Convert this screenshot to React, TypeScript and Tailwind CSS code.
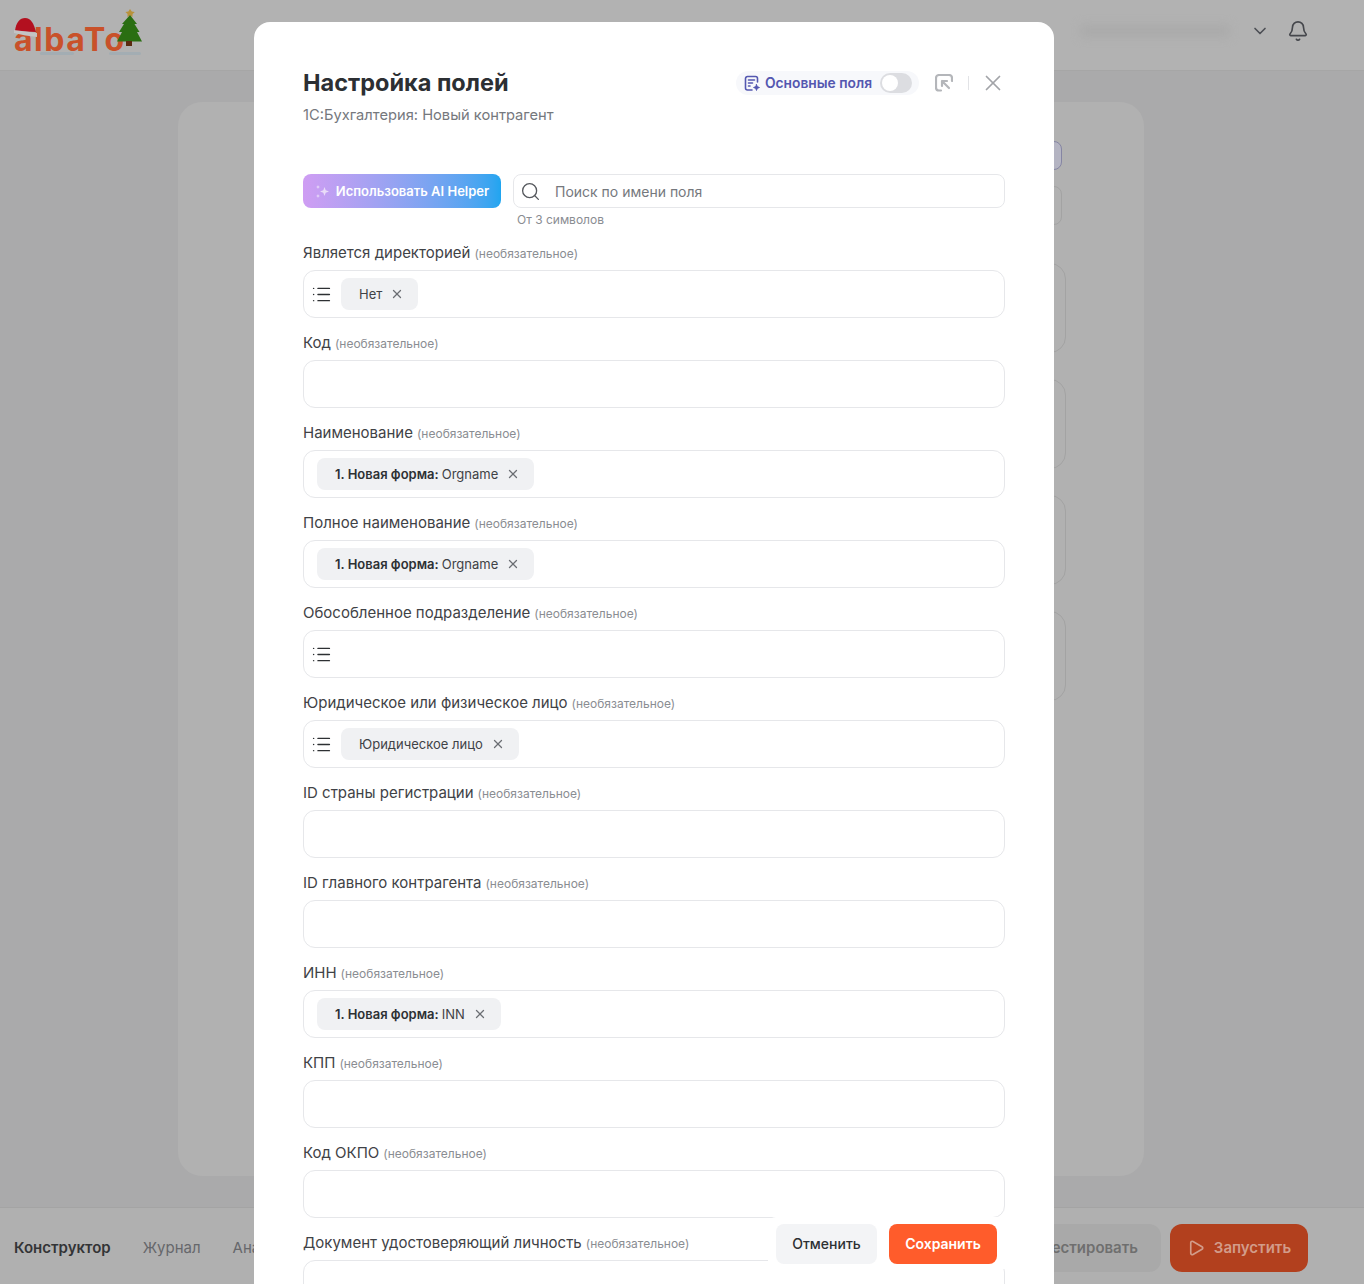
import React from 'react';
import { X, Search, ChevronDown, Bell, Play, List } from 'lucide-react';

type Chip = { bold?: string; text: string };
type Field = { label: string; list?: boolean; chip?: Chip };

const fields: Field[] = [
  { label: 'Является директорией', list: true, chip: { text: 'Нет' } },
  { label: 'Код' },
  { label: 'Наименование', chip: { bold: '1. Новая форма:', text: 'Orgname' } },
  { label: 'Полное наименование', chip: { bold: '1. Новая форма:', text: 'Orgname' } },
  { label: 'Обособленное подразделение', list: true },
  { label: 'Юридическое или физическое лицо', list: true, chip: { text: 'Юридическое лицо' } },
  { label: 'ID страны регистрации' },
  { label: 'ID главного контрагента' },
  { label: 'ИНН', chip: { bold: '1. Новая форма:', text: 'INN' } },
  { label: 'КПП' },
  { label: 'Код ОКПО' },
  { label: 'Документ удостоверяющий личность' },
];

function Logo() {
  return (
    <div className="relative w-[130px] h-[56px]">
      <span className="absolute left-[1px] top-[13px] text-[32px] leading-[40px] font-bold tracking-[1.5px] text-[#c9512a]">
        albaTo
      </span>
      {/* snow under the letters */}
      <div className="absolute left-[27px] top-[45px] w-[34px] h-[3px] rounded-full bg-[#a3adb3]" />
      <div className="absolute left-[96px] top-[45px] w-[32px] h-[3px] rounded-full bg-[#a3adb3]" />
      {/* santa hat */}
      <svg className="absolute left-[0px] top-[10px]" width="26" height="22" viewBox="0 0 26 22">
        <path d="M2 14C3 5 7 1 12 1c6 0 9 6 11 14z" fill="#b3101f" />
        <path d="M1 13c8 1 15 2 23 3v4C17 19 8 18 1 16z" fill="#c4c4c4" />
      </svg>
      {/* tree */}
      <svg className="absolute left-[102px] top-[2px]" width="28" height="41" viewBox="0 0 28 41">
        <path d="M15 0l1.800 2.600 3 .4-2.200 2-.2 3-2.400-1.400-2.600 1.400.2-3-2.200-2 3-.4z" fill="#b8923c" />
        <path d="M15 6l7 9h-2.500l5 8H22l5 9.500H2L7 23H4l5-8H7z" fill="#2a6e12" />
        <rect x="11" y="32" width="6" height="5" fill="#5a2a10" />
      </svg>
    </div>
  );
}

function FieldRow({ field }: { field: Field }) {
  return (
    <div className="flex flex-col gap-[5px] shrink-0 mb-[9px]">
      <div className="flex items-baseline gap-[4px] h-[28px] pt-[6px]">
        <span className="text-[15px] leading-[20px] text-[#3f4246]">{field.label}</span>
        <span className="text-[12px] leading-[20px] text-[#8a8d92]">(необязательное)</span>
      </div>
      <div className="flex items-center h-[48px] rounded-[12px] border border-[#e6e7ea] bg-white pl-[7px] pr-3 gap-[9px]">
        {field.list && <List className="w-[21px] h-[21px] text-[#2d3033]" strokeWidth={1.7} />}
        {field.chip && (
          <div
            className={`flex items-center h-[32px] rounded-[8px] bg-[#f0f1f3] pl-[18px] pr-[14px] gap-[8px] text-[13px] text-[#3f4246] ${
              field.list ? '' : 'ml-[6px]'
            }`}
          >
            <span className="pt-[1px]">
              {field.chip.bold && <b className="font-semibold text-[#2d3033] mr-[3px]">{field.chip.bold}</b>}
              {field.chip.text}
            </span>
            <X className="w-[14px] h-[14px] text-[#6b6e73]" strokeWidth={2.2} />
          </div>
        )}
      </div>
    </div>
  );
}

export default function App() {
  return (
    <div className="relative h-[1284px] overflow-hidden bg-[#aaaaab] font-['Inter',sans-serif] flex flex-col">
      {/* Page behind the dim layer */}
      <header className="h-[71px] shrink-0 bg-[#b2b2b2] border-b border-[#a6a6a6] flex items-center pl-[13px] pr-[55px]">
        <Logo />
        <div className="ml-auto flex items-center pb-[8px]">
          <div className="w-[150px] h-[14px] bg-[#ababab] blur-[4px] rounded mr-[20px]" />
          <ChevronDown className="w-[20px] h-[20px] text-[#4d4f55] mr-[17px]" strokeWidth={2} />
          <Bell className="w-[22px] h-[22px] text-[#45474c]" strokeWidth={1.8} />
        </div>
      </header>

      <main className="flex-1 px-[178px] pt-[31px] pb-[31px]">
        <div className="h-full w-[966px] rounded-[24px] bg-[#b1b1b1] pt-[39px] pl-[800px]">
          <div className="h-[29px] w-[84px] rounded-[8px] bg-[#b4b4c2] border border-[#8585a3]" />
          <div className="mt-[16px] h-[39px] w-[84px] rounded-[8px] border border-[#a3a3a3]" />
          <div className="mt-[38px] flex flex-col gap-[26px]">
            <div className="h-[90px] w-[88px] rounded-[16px] border border-[#a3a3a3]" />
            <div className="h-[90px] w-[88px] rounded-[16px] border border-[#a3a3a3]" />
            <div className="h-[90px] w-[88px] rounded-[16px] border border-[#a3a3a3]" />
            <div className="h-[90px] w-[88px] rounded-[16px] border border-[#a3a3a3]" />
          </div>
        </div>
      </main>

      <footer className="h-[77px] shrink-0 bg-[#b0b0b0] border-t border-[#a4a4a4] flex items-center pl-[14px] pr-[56px] pt-[4px] text-[15px]">
        <span className="font-semibold text-[#333436]">Конструктор</span>
        <span className="ml-[32px] text-[#66676b]">Журнал</span>
        <span className="ml-[32px] text-[#66676b]">Аналитика</span>
        <div className="ml-auto flex items-center gap-[9px]">
          <div className="h-[48px] w-[180px] rounded-[12px] bg-[#a9a9a9] flex items-center justify-end pr-[23px] font-semibold text-[#6f6f6f]">
            Протестировать
          </div>
          <div className="h-[48px] w-[138px] rounded-[12px] bg-[#b2401e] flex items-center justify-center gap-[9px] font-semibold text-[#d29c8a]">
            <Play className="w-[18px] h-[18px]" strokeWidth={2.2} />
            Запустить
          </div>
        </div>
      </footer>

      {/* Modal */}
      <div className="absolute left-[254px] top-[22px] w-[800px] h-[1290px] bg-white rounded-[16px] px-[49px] pt-[46px] overflow-hidden">
        <div className="flex justify-between items-start h-[106px]">
          <div>
            <h2 className="text-[23.5px] leading-[30px] font-bold text-[#2c2f33]">Настройка полей</h2>
            <p className="mt-[7px] text-[14.7px] leading-[20px] text-[#75787d]">1С:Бухгалтерия: Новый контрагент</p>
          </div>
          <div className="flex items-center mt-[2px] mr-[-1px]">
            <div className="flex items-center h-[24px] rounded-full bg-[#f7f8fb] pl-[8px] pr-[7px] gap-[4px]">
              <svg width="17" height="17" viewBox="0 0 17 17" fill="none" stroke="#5457b0" strokeWidth="1.6" strokeLinecap="round" strokeLinejoin="round">
                <path d="M8 15H3.500A2 2 0 0 1 1.500 13V3.500a2 2 0 0 1 2-2h8a2 2 0 0 1 2 2V7" />
                <path d="M4.500 5h6M4.500 8h4M4.500 11h1.500" />
                <path d="M12.500 9.500l.9 2.100 2.100.9-2.100.9-.9 2.100-.9-2.100-2.100-.9 2.100-.9z" fill="#5457b0" strokeWidth="0.8" />
              </svg>
              <span className="text-[13.8px] font-semibold text-[#5457b0]">Основные поля</span>
              <div className="ml-[4px] w-[32px] h-[20px] rounded-full bg-[#dcdde1] p-[2px]">
                <div className="w-[16px] h-[16px] rounded-full bg-white" />
              </div>
            </div>
            <svg className="ml-[16px]" width="18" height="18" viewBox="0 0 18 18" fill="none" stroke="#b4b6ba" strokeWidth="2.2" strokeLinecap="round" strokeLinejoin="round">
              <path d="M6 16.500H4a3 3 0 0 1-3-3V4a3 3 0 0 1 3-3h10a3 3 0 0 1 3 3v3" />
              <path d="M14 14L7 7M7 12V7h5" />
            </svg>
            <div className="ml-[15px] w-px h-[14px] bg-[#e2e3e6]" />
            <X className="ml-[11px] w-[26px] h-[26px] text-[#a2a4a8]" strokeWidth={1.6} />
          </div>
        </div>

        <div className="flex gap-[12px]">
          <button className="w-[198px] h-[34px] pt-[1px] rounded-[8px] bg-gradient-to-r from-[#cf9df3] to-[#1fa5f0] flex items-center justify-center gap-[6px] text-white text-[13px] font-semibold">
            <svg width="15" height="15" viewBox="0 0 15 15" fill="#e9dcf8">
              <path d="M9.500 3l1.200 3.300L14 7.500l-3.300 1.200L9.500 12 8.300 8.700 5 7.500l3.300-1.200z" />
              <path d="M3 1l.6 1.400L5 3l-1.400.6L3 5l-.6-1.400L1 3l1.400-.6z" />
              <path d="M3 10l.6 1.400L5 12l-1.400.6L3 14l-.6-1.400L1 12l1.400-.6z" />
            </svg>
            Использовать AI Helper
          </button>
          <div className="flex-1">
            <div className="h-[34px] rounded-[8px] border border-[#e6e7ea] flex items-center pl-[6px] gap-[14px]">
              <Search className="w-[21px] h-[21px] text-[#55585d]" strokeWidth={1.5} />
              <span className="text-[14px] text-[#75787d]">Поиск по имени поля</span>
            </div>
            <p className="mt-[4px] ml-[4px] text-[12px] leading-[16px] text-[#8a8d92]">От 3 символов</p>
          </div>
        </div>

        <div className="mt-[9px]">
          {fields.map((f) => (
            <FieldRow key={f.label} field={f} />
          ))}
        </div>

        <div className="absolute right-[49px] top-[1195px] w-[237px] h-[52px] rounded-tl-[8px] bg-white flex items-start justify-end gap-[12px] pt-[7px] pr-[8px]">
          <button className="w-[101px] h-[40px] pb-[1px] rounded-[8px] bg-[#f3f4f6] text-[14px] font-medium text-[#2d3033]">Отменить</button>
          <button className="w-[108px] h-[40px] pb-[1px] rounded-[8px] bg-[#ff5c2b] text-[14px] font-semibold text-white">Сохранить</button>
        </div>
      </div>
    </div>
  );
}
